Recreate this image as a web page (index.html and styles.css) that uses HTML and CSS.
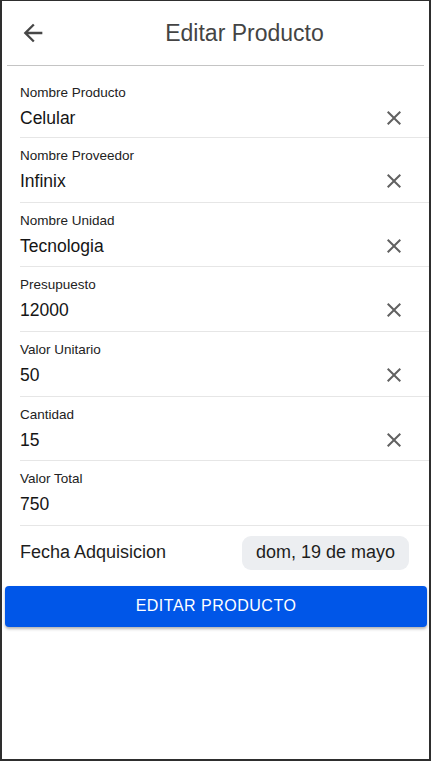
FILE: index.html
```html
<!DOCTYPE html>
<html lang="es">
<head>
<meta charset="utf-8">
<title>Editar Producto</title>
<link rel="stylesheet" href="styles.css">
</head>
<body>
<div class="frame">
  <header class="topbar">
    <button class="back" aria-label="Volver">
      <svg viewBox="0 0 24 24" width="28" height="28"><path d="M20 11H7.83l5.59-5.59L12 4l-8 8 8 8 1.41-1.41L7.83 13H20v-2z"/></svg>
    </button>
    <h1 class="title">Editar Producto</h1>
  </header>
  <div class="list">
    <div class="field">
      <div class="label">Nombre Producto</div>
      <div class="value-line"><span class="value">Celular</span><svg class="clear" viewBox="0 0 24 24" width="24" height="24"><path d="M19 6.41L17.59 5 12 10.59 6.41 5 5 6.41 10.59 12 5 17.59 6.41 19 12 13.41 17.59 19 19 17.59 13.41 12z"/></svg></div>
    </div>
    <div class="field">
      <div class="label">Nombre Proveedor</div>
      <div class="value-line"><span class="value">Infinix</span><svg class="clear" viewBox="0 0 24 24" width="24" height="24"><path d="M19 6.41L17.59 5 12 10.59 6.41 5 5 6.41 10.59 12 5 17.59 6.41 19 12 13.41 17.59 19 19 17.59 13.41 12z"/></svg></div>
    </div>
    <div class="field">
      <div class="label">Nombre Unidad</div>
      <div class="value-line"><span class="value">Tecnologia</span><svg class="clear" viewBox="0 0 24 24" width="24" height="24"><path d="M19 6.41L17.59 5 12 10.59 6.41 5 5 6.41 10.59 12 5 17.59 6.41 19 12 13.41 17.59 19 19 17.59 13.41 12z"/></svg></div>
    </div>
    <div class="field">
      <div class="label">Presupuesto</div>
      <div class="value-line"><span class="value">12000</span><svg class="clear" viewBox="0 0 24 24" width="24" height="24"><path d="M19 6.41L17.59 5 12 10.59 6.41 5 5 6.41 10.59 12 5 17.59 6.41 19 12 13.41 17.59 19 19 17.59 13.41 12z"/></svg></div>
    </div>
    <div class="field">
      <div class="label">Valor Unitario</div>
      <div class="value-line"><span class="value">50</span><svg class="clear" viewBox="0 0 24 24" width="24" height="24"><path d="M19 6.41L17.59 5 12 10.59 6.41 5 5 6.41 10.59 12 5 17.59 6.41 19 12 13.41 17.59 19 19 17.59 13.41 12z"/></svg></div>
    </div>
    <div class="field">
      <div class="label">Cantidad</div>
      <div class="value-line"><span class="value">15</span><svg class="clear" viewBox="0 0 24 24" width="24" height="24"><path d="M19 6.41L17.59 5 12 10.59 6.41 5 5 6.41 10.59 12 5 17.59 6.41 19 12 13.41 17.59 19 19 17.59 13.41 12z"/></svg></div>
    </div>
    <div class="field">
      <div class="label">Valor Total</div>
      <div class="value-line"><span class="value">750</span></div>
    </div>
    <div class="date-row">
      <span class="date-label">Fecha Adquisicion</span>
      <span class="chip">dom, 19 de mayo</span>
    </div>
  </div>
  <button class="submit">EDITAR PRODUCTO</button>
</div>
</body>
</html>
```
FILE: styles.css
```css
* { box-sizing: border-box; }
html, body { margin: 0; padding: 0; background: #ffffff; }
body { font-family: "Liberation Sans", Arial, sans-serif; }

.frame {
  width: 431px;
  height: 761px;
  border-style: solid;
  border-color: #2e2e2e;
  border-width: 1px 2px 2px 2px;
  background: #fff;
  display: flex;
  flex-direction: column;
}

.topbar {
  height: 65px;
  margin: 0 5px;
  border-bottom: 1px solid #c4c4c4;
  display: flex;
  align-items: center;
}

.back {
  border: 0;
  background: none;
  padding: 0;
  margin: 0 0 0 12px;
  width: 28px;
  height: 28px;
  display: flex;
  align-items: center;
  justify-content: center;
  cursor: pointer;
}
.back svg { fill: #474747; display: block; }

.title {
  flex: 1;
  margin: 0;
  padding-left: 18px;
  text-align: center;
  font-weight: 400;
  font-size: 23px;
  line-height: 64px;
  color: #444444;
}

.list {
  padding-top: 8px;
  margin-left: 18px;
}

.field {
  padding: 10px 23px 0 0;
  height: 64.67px;
  border-top: 1px solid #e6e6e6;
}
.field:first-child { border-top: 0; height: 63px; padding-top: 11px; }

.label {
  font-size: 13.5px;
  line-height: 16px;
  color: #222;
}

.value-line {
  margin-top: 6px;
  height: 22px;
  display: flex;
  align-items: center;
  justify-content: space-between;
}
.value {
  font-size: 17.5px;
  line-height: 22px;
  color: #151515;
}
.clear { fill: #616161; display: block; flex: none; }

.date-row {
  border-top: 1px solid #e6e6e6;
  height: 55px;
  padding-right: 20px;
  display: flex;
  align-items: center;
  justify-content: space-between;
}
.date-label {
  font-size: 18px;
  color: #1e1e1e;
}
.chip {
  background: #eceef1;
  border-radius: 9px;
  height: 34px;
  padding: 0 14px;
  display: flex;
  align-items: center;
  font-size: 18px;
  color: #1e1e1e;
}

.submit {
  margin: 6px 2px 0 3px;
  height: 41px;
  border: 0;
  border-radius: 4px;
  background: #0056e8;
  color: #fff;
  font-family: "Liberation Sans", Arial, sans-serif;
  font-size: 16px;
  letter-spacing: 0.5px;
  box-shadow: 0 2px 3px rgba(0, 0, 0, 0.3);
  cursor: pointer;
}
```
